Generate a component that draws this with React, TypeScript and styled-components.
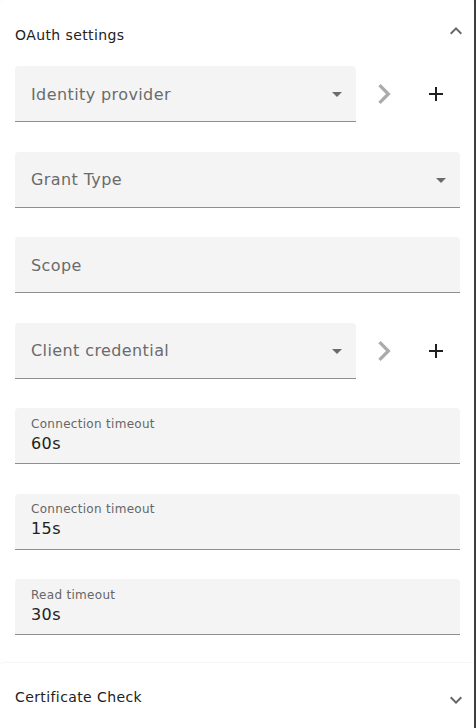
import React from 'react';
import styled, { createGlobalStyle } from 'styled-components';

const GlobalStyle = createGlobalStyle`
  html, body {
    margin: 0;
    padding: 0;
    background: #ffffff;
  }
  body {
    font-family: "DejaVu Sans", "Liberation Sans", sans-serif;
    color: #222222;
  }
`;

const Page = styled.div`
  box-sizing: border-box;
  width: 476px;
  height: 728px;
  overflow: hidden;
  background: #ffffff;
  border-right: 2px solid #3f3f3f;
`;

const Accordion = styled.section<{ $gap?: number }>`
  background: #ffffff;
  margin-top: ${(p) => p.$gap ?? 0}px;
  border-radius: 4px;
  box-shadow: 0 -1px 1px rgba(0, 0, 0, 0.04);
`;

const Summary = styled.div`
  display: flex;
  align-items: center;
  justify-content: space-between;
  height: 66px;
  padding: 0 6px 0 15px;
`;

const Title = styled.span<{ $shift: number }>`
  font-size: 14px;
  font-weight: 500;
  letter-spacing: 0.4px;
  color: #222222;
  transform: translateY(${(p) => p.$shift}px);
`;

const Details = styled.div`
  display: flex;
  flex-direction: column;
  gap: 29.5px;
  padding: 0 14px 16px 15px;
`;

const Row = styled.div`
  display: flex;
  align-items: center;
`;

const Field = styled.div<{ $narrow?: boolean }>`
  position: relative;
  box-sizing: border-box;
  width: ${(p) => (p.$narrow ? '341px' : '445px')};
  height: 56px;
  background: #f4f4f4;
  border-radius: 4px 4px 0 0;
  border-bottom: 1px solid #8f8f8f;
  padding: 0 16px;
  display: flex;
  flex-direction: column;
  justify-content: center;
`;

const Placeholder = styled.span`
  font-size: 16px;
  letter-spacing: 0.4px;
  color: #6b6b6b;
  margin-top: 1px;
`;

const SmallLabel = styled.span`
  font-size: 12px;
  letter-spacing: 0.3px;
  color: #666666;
  line-height: 14px;
`;

const Value = styled.span`
  font-size: 16px;
  letter-spacing: 0.4px;
  color: #222222;
  line-height: 23px;
  margin-top: 1px;
`;

const DropArrow = styled.svg`
  position: absolute;
  right: 7px;
  top: 16px;
  width: 24px;
  height: 24px;
  fill: #6b6b6b;
`;

const IconButton = styled.button<{ $color: string }>`
  width: 48px;
  height: 48px;
  margin-left: 4px;
  padding: 0;
  border: none;
  background: transparent;
  display: flex;
  align-items: center;
  justify-content: center;
  color: ${(p) => p.$color};
  cursor: pointer;

  svg {
    fill: currentColor;
  }
`;

const Expand = styled.svg<{ $up?: boolean; $shift: number }>`
  width: 24px;
  height: 24px;
  fill: #666666;
  transform: translateY(${(p) => p.$shift}px)
    ${(p) => (p.$up ? 'rotate(180deg)' : '')};
`;

function ExpandIcon({ up, shift }: { up?: boolean; shift: number }) {
  return (
    <Expand $up={up} $shift={shift} viewBox="0 0 24 24">
      <path d="M16.59 8.59 12 13.17 7.41 8.59 6 10l6 6 6-6z" />
    </Expand>
  );
}

function SelectField({ label, narrow }: { label: string; narrow?: boolean }) {
  return (
    <Field $narrow={narrow}>
      <Placeholder>{label}</Placeholder>
      <DropArrow viewBox="0 0 24 24">
        <path d="M7 10l5 5 5-5z" />
      </DropArrow>
    </Field>
  );
}

function TextField({ label, value }: { label: string; value?: string }) {
  if (!value) {
    return (
      <Field>
        <Placeholder>{label}</Placeholder>
      </Field>
    );
  }
  return (
    <Field>
      <SmallLabel>{label}</SmallLabel>
      <Value>{value}</Value>
    </Field>
  );
}

function SelectWithActions({ label }: { label: string }) {
  return (
    <Row>
      <SelectField label={label} narrow />
      <IconButton $color="#ababab" aria-label="open">
        <svg width="40" height="40" viewBox="0 0 24 24">
          <path d="M10 6 8.59 7.41 13.17 12l-4.58 4.59L10 18l6-6z" />
        </svg>
      </IconButton>
      <IconButton $color="#1f1f1f" aria-label="add">
        <svg width="24" height="24" viewBox="0 0 24 24">
          <path d="M19 13h-6v6h-2v-6H5v-2h6V5h2v6h6v2z" />
        </svg>
      </IconButton>
    </Row>
  );
}

export default function App() {
  return (
    <Page>
      <GlobalStyle />
      <Accordion>
        <Summary>
          <Title $shift={2}>OAuth settings</Title>
          <ExpandIcon up shift={-2} />
        </Summary>
        <Details>
          <SelectWithActions label="Identity provider" />
          <SelectField label="Grant Type" />
          <TextField label="Scope" />
          <SelectWithActions label="Client credential" />
          <TextField label="Connection timeout" value="60s" />
          <TextField label="Connection timeout" value="15s" />
          <TextField label="Read timeout" value="30s" />
        </Details>
      </Accordion>
      <Accordion $gap={12}>
        <Summary>
          <Title $shift={1}>Certificate Check</Title>
          <ExpandIcon shift={4} />
        </Summary>
      </Accordion>
    </Page>
  );
}
